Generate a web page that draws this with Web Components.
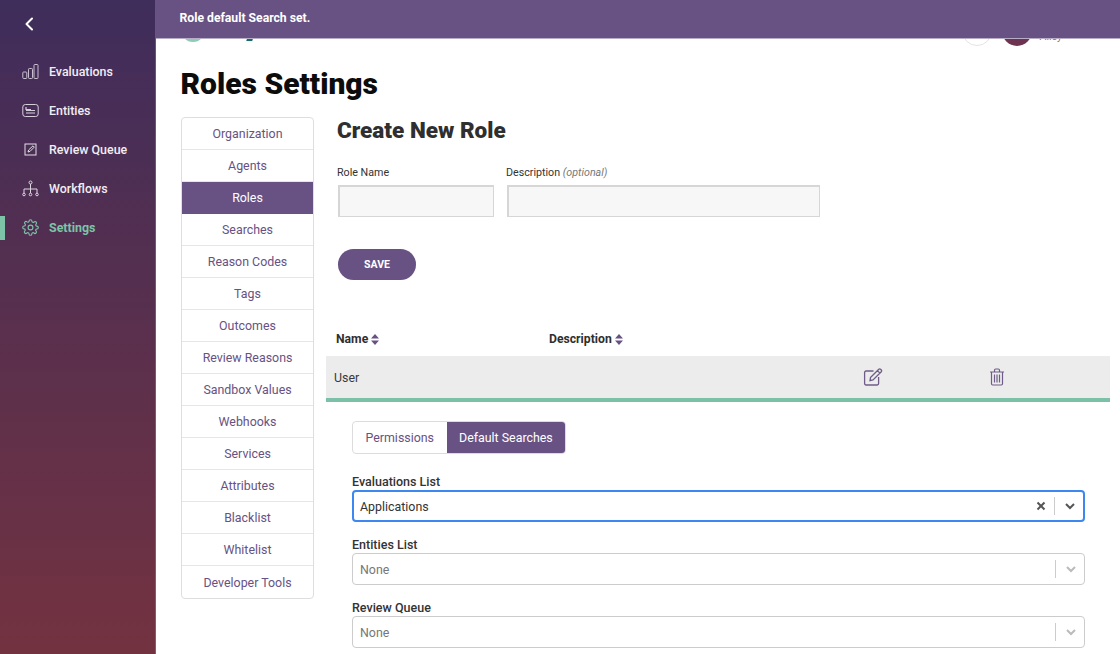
<!DOCTYPE html>
<html><head><meta charset="utf-8"><style>
html,body{margin:0;height:654px;overflow:hidden;background:#fff;font-family:Roboto,"Liberation Sans",sans-serif;-webkit-font-smoothing:antialiased}
</style></head><body>
<template id="t-shell"><style>
:host{display:grid;grid-template-columns:156px 1fr;height:654px;overflow:hidden;position:relative}
.main{min-width:0;display:flex;flex-direction:column;height:654px;overflow:hidden;position:relative}
.cols{display:flex;padding:0 10px 0 25px;gap:12px;align-items:flex-start}
</style><slot name="side"></slot><div class="main"><slot name="toast"></slot><slot name="header"></slot><slot name="title"></slot><div class="cols"><slot name="nav"></slot><slot></slot></div></div></template>

<template id="t-side"><style>
:host{display:block;height:654px;background:linear-gradient(180deg,#3f2d5b 0%,#733240 100%);color:#fff;box-sizing:border-box;padding-top:52px;position:relative;border-right:1px solid rgba(255,255,255,.2)}
.back{position:absolute;left:24px;top:17px;width:10px;height:14px}
</style><svg class="back" viewBox="0 0 10 14" fill="none" stroke="#fff" stroke-width="2" stroke-linecap="round" stroke-linejoin="round"><path d="M8 1.500 2.500 7 8 12.500"/></svg><slot></slot></template>

<template id="t-sitem"><style>
:host{display:flex;align-items:center;height:39px;padding-left:22px;font-size:12.4px;font-weight:500;color:#f1edf3;gap:10px;position:relative}
:host([active]){color:#7cc3a8;font-weight:700}
:host([active])::before{content:"";position:absolute;left:0;top:8px;width:5px;height:24px;background:#7cc3a8}
.i{width:17px;height:17px;display:flex;align-items:center;justify-content:center;flex:none}
</style><span class="i"><slot name="icon"></slot></span><span><slot></slot></span></template>

<template id="t-toast"><style>
:host{position:absolute;left:0;right:0;top:0;height:38px;background:#675283;color:#fff;font-size:12.2px;font-weight:700;display:flex;align-items:center;padding-left:23.500px;padding-bottom:3px;box-sizing:border-box;z-index:5;box-shadow:0 1px 0 #b8adc6}
</style><slot></slot></template>

<template id="t-header"><style>
:host{display:flex;height:46px;flex:none;align-items:flex-end;position:relative;overflow:hidden}
.logo{margin-left:24.500px;width:24px;height:24px;border:3px solid #8bcdb5;border-radius:50%;box-sizing:border-box;margin-bottom:4px;flex:none}
.y{margin-left:43px;width:6px;height:10px;background:#0f6f6e;margin-bottom:5px;transform:skewX(-20deg);flex:none}
.sp{flex:1}
.bell{width:30px;height:30px;border:1px solid #e3e3e3;border-radius:50%;box-sizing:border-box;margin-bottom:0}
.av{width:30px;height:30px;border-radius:50%;background:#6d3350;margin-left:10px}
.n{font-size:10.500px;color:#777;margin:0 58px 0 8px;line-height:12px;padding-bottom:3px}
</style><span class="logo"></span><span class="y"></span><span class="sp"></span><span class="bell"></span><span class="av"></span><span class="n">Ailey</span></template>

<template id="t-title"><style>
:host{display:block;font-size:30px;font-weight:900;color:#0c0c0c;line-height:36px;padding:20px 0 15px 24.500px}
</style><slot></slot></template>

<template id="t-nav"><style>
:host{display:block;width:133px;flex:none;border:1px solid #dedede;border-radius:4px;box-sizing:border-box;overflow:hidden;background:#fff}
</style><slot></slot></template>

<template id="t-nitem"><style>
:host{display:flex;height:32px;box-sizing:border-box;align-items:center;justify-content:center;font-size:12.400px;color:#675283;border-bottom:1px solid #e6e6e6}
:host(:last-child){border-bottom:0}
:host([active]){background:#675283;color:#fff;border-bottom-color:#675283}
</style><slot></slot></template>

<template id="t-content"><style>
:host{display:block;flex:1;min-width:0;height:540px;overflow:hidden}
h2{margin:-1px 0 0 11px;font-size:22.500px;font-weight:900;color:#2f2f2f;line-height:28px}
.form{display:flex;gap:13px;margin:21px 0 0 12px}
.save{margin:32px 0 0 12px;width:78px;height:31px;border:0;border-radius:16px;background:#675283;color:#fff;font:700 10.500px Roboto,sans-serif;display:block}
.thead{display:flex;margin-top:50px;padding-left:10px;font-size:12.200px;font-weight:700;color:#2f2f2f;height:18px;align-items:center}
.thead span{display:flex;align-items:center;gap:3px}
.thead span:first-child{width:213px}
.sort{width:8px;height:11px;fill:#675283}
.row{display:flex;align-items:center;height:42px;background:#ececec;border-bottom:4px solid #7cc0a8;margin-top:8px;font-size:12.400px;color:#3a3a3a;padding-left:8px;position:relative}
.row .name{flex:0 0 529px}
.row .ed{width:20px;height:20px}
.row .tr{width:16px;height:18px;margin-left:106px}
.panel{padding:19px 25px 0 26px}
.tabs{display:inline-flex;height:33px;border:1px solid #dcdcdc;border-radius:4px;box-sizing:border-box;font-size:12.400px;overflow:hidden;margin-bottom:21px}
.tabs span{display:flex;align-items:center;padding:0 12.500px;color:#675283}
.tabs span.on{background:#675283;color:#fff}
</style>
<h2>Create New Role</h2>
<div class="form"><x-field w="156">Role Name</x-field><x-field w="313">Description <i slot="hint">(optional)</i></x-field></div>
<button class="save">SAVE</button>
<div class="thead"><span>Name <svg class="sort" viewBox="0 0 8 11"><path d="M4 0 8 4.600H0zM4 11 0 6.400h8z"/></svg></span><span>Description <svg class="sort" viewBox="0 0 8 11"><path d="M4 0 8 4.600H0zM4 11 0 6.400h8z"/></svg></span></div>
<div class="row"><span class="name">User</span>
<svg class="ed" viewBox="0 0 20 20" fill="none" stroke="#6f5c88" stroke-width="1.300"><path d="M10.500 4H3a1.400 1.400 0 0 0-1.400 1.400v11.200A1.400 1.400 0 0 0 3 18h11.200a1.400 1.400 0 0 0 1.400-1.400V10"/><path d="M7.500 10.500 15.800 2.200a1.200 1.200 0 0 1 1.700 0l.8.8a1.200 1.200 0 0 1 0 1.700L10 13l-3 .6zM14.400 3.600l2.500 2.500"/></svg>
<svg class="tr" viewBox="0 0 16 18" fill="none" stroke="#6f5c88" stroke-width="1.200"><path d="M1 4h14M5.500 4V2.200c0-.7.5-1.200 1.200-1.200h2.600c.7 0 1.200.5 1.200 1.200V4M2.500 4v11.800c0 .7.5 1.200 1.200 1.200h8.600c.7 0 1.200-.5 1.200-1.200V4M5.500 6.500v8M8 6.500v8M10.500 6.500v8"/></svg>
</div>
<div class="panel">
<div class="tabs"><span>Permissions</span><span class="on">Default Searches</span></div>
<x-select label="Evaluations List" value="Applications" focus></x-select>
<x-select label="Entities List" value="None"></x-select>
<x-select label="Review Queue" value="None"></x-select>
</div></template>

<template id="t-field"><style>
:host{display:block;font-size:10.700px;color:#333;font-weight:400}
.l{display:block;height:14px;line-height:14px;margin:1px 0 5px -1px}
::slotted(i){color:#777;font-weight:400}
.in{display:block;box-sizing:border-box;height:32px;background:#f7f7f7;border:2px solid #d6d6d6;border-right-width:1px;border-bottom-width:1px}
</style><span class="l"><slot></slot> <slot name="hint"></slot></span><span class="in" id="b"></span></template>

<template id="t-select"><style>
:host{display:block;margin-bottom:16px}
.l{display:block;font-size:12.500px;font-weight:500;color:#333;line-height:14px;margin-bottom:1px}
.c{display:flex;align-items:center;height:32px;box-sizing:border-box;border:1px solid #ccc;border-radius:4px;font-size:12.400px;color:#777;padding-left:7px}
:host([focus]) .c{border:2px solid #3d87f0;color:#333;padding-left:6px}
.v{flex:1}
.x{width:10px;height:10px;margin-right:8px}
.sep{width:1px;height:18px;background:#ccc}
.d{width:10px;height:7px;margin:0 8px 0 10px}
</style><span class="l" id="l"></span><div class="c"><span class="v" id="v"></span><svg class="x" id="x" viewBox="0 0 10 10" fill="none" stroke="#555" stroke-width="2"><path d="M1.500 1.500l7 7M8.500 1.500l-7 7"/></svg><span class="sep"></span><svg class="d" viewBox="0 0 10 7" fill="none" stroke-width="2" id="d"><path d="M1 1l4 4 4-4"/></svg></div></template>

<x-shell>
<x-side slot="side">
<x-sitem><svg slot="icon" viewBox="0 0 17 17" width="17" height="17" fill="none" stroke="#c8c0d0" stroke-width="1"><rect x=".8" y="9" width="4" height="6.500" rx=".8"/><rect x="6.500" y="5.500" width="4" height="10" rx=".8"/><rect x="12" y="1.500" width="4" height="14" rx=".8"/></svg>Evaluations</x-sitem>
<x-sitem><svg slot="icon" viewBox="0 0 17 17" width="17" height="17" fill="none" stroke="#d5cfdb" stroke-width="1"><rect x=".8" y="2.500" width="15.400" height="12" rx="2.500"/><path d="M4 5v2.500h5M4 8.500h9M4 11h9" stroke-width="1.200"/></svg>Entities</x-sitem>
<x-sitem><svg slot="icon" viewBox="0 0 17 17" width="17" height="17" fill="none" stroke="#e4dfe7" stroke-width="1"><rect x="3" y="3" width="11" height="11"/><path d="M6 11l.6-2L11 4.800l1.300 1.300L8 10.400z"/></svg>Review Queue</x-sitem>
<x-sitem><svg slot="icon" viewBox="0 0 17 17" width="17" height="17" fill="none" stroke="#dcd6e0" stroke-width="1"><circle cx="8.500" cy="2.500" r="1.500"/><circle cx="2" cy="14.500" r="1.300"/><circle cx="8.500" cy="14.500" r="1.300"/><circle cx="15" cy="14.500" r="1.300"/><path d="M8.500 4v9M2 13V9h13v4"/></svg>Workflows</x-sitem>
<x-sitem active><svg slot="icon" viewBox="0 0 24 24" width="17" height="17" fill="none" stroke="#7cc3a8" stroke-width="1.600" stroke-linejoin="round"><circle cx="12" cy="12" r="3.400"/><path d="M19.400 15a1.700 1.700 0 0 0 .3 1.800l.1.1a2 2 0 1 1-2.900 2.900l-.1-.1a1.700 1.700 0 0 0-2.900 1.200V21a2 2 0 0 1-4 0v-.1A1.700 1.700 0 0 0 7 19.700l-.1.1A2 2 0 1 1 4 16.900l.1-.1a1.700 1.700 0 0 0-1.200-2.900H3a2 2 0 0 1 0-4h.1A1.700 1.700 0 0 0 4.300 7L4.200 6.900A2 2 0 1 1 7.100 4l.1.1a1.700 1.700 0 0 0 1.800.3h.1A1.700 1.700 0 0 0 10 2.900V3a2 2 0 0 1 4 0v.1a1.700 1.700 0 0 0 2.900 1.200l.1-.1A2 2 0 1 1 19.900 7.100l-.1.1a1.700 1.700 0 0 0-.3 1.800v.1a1.700 1.700 0 0 0 1.500 1H21a2 2 0 0 1 0 4h-.1a1.700 1.700 0 0 0-1.500 1z"/></svg>Settings</x-sitem>
</x-side>
<x-toast slot="toast">Role default Search set.</x-toast>
<x-header slot="header"></x-header>
<x-title slot="title">Roles Settings</x-title>
<x-nav slot="nav">
<x-nitem>Organization</x-nitem><x-nitem>Agents</x-nitem><x-nitem active>Roles</x-nitem><x-nitem>Searches</x-nitem><x-nitem>Reason Codes</x-nitem><x-nitem>Tags</x-nitem><x-nitem>Outcomes</x-nitem><x-nitem>Review Reasons</x-nitem><x-nitem>Sandbox Values</x-nitem><x-nitem>Webhooks</x-nitem><x-nitem>Services</x-nitem><x-nitem>Attributes</x-nitem><x-nitem>Blacklist</x-nitem><x-nitem>Whitelist</x-nitem><x-nitem>Developer Tools</x-nitem>
</x-nav>
<x-content></x-content>
</x-shell>
<script>
const simple={shell:'x-shell',side:'x-side',sitem:'x-sitem',toast:'x-toast',header:'x-header',title:'x-title',nav:'x-nav',nitem:'x-nitem',content:'x-content'};
for(const k in simple){customElements.define(simple[k],class extends HTMLElement{constructor(){super();this.attachShadow({mode:'open'}).append(document.getElementById('t-'+k).content.cloneNode(true));}});}
customElements.define('x-field',class extends HTMLElement{constructor(){super();const s=this.attachShadow({mode:'open'});s.append(document.getElementById('t-field').content.cloneNode(true));}connectedCallback(){this.shadowRoot.getElementById('b').style.width=this.getAttribute('w')+'px';}});
customElements.define('x-select',class extends HTMLElement{constructor(){super();this.attachShadow({mode:'open'}).append(document.getElementById('t-select').content.cloneNode(true));}connectedCallback(){const s=this.shadowRoot,f=this.hasAttribute('focus');s.getElementById('l').textContent=this.getAttribute('label');s.getElementById('v').textContent=this.getAttribute('value');s.getElementById('x').style.display=f?'':'none';s.getElementById('d').setAttribute('stroke',f?'#555':'#bbb');}});
</script>
</body></html>
